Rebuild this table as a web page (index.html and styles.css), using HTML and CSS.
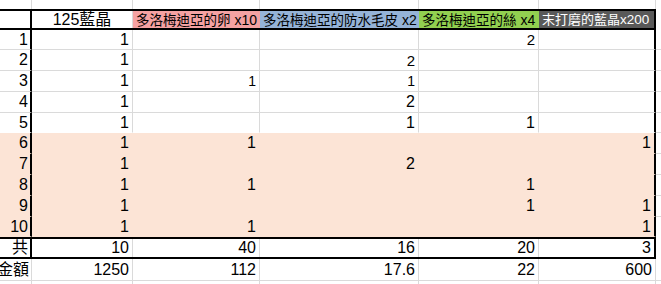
FILE: index.html
```html
<!DOCTYPE html>
<html lang="zh-Hant">
<head>
<meta charset="utf-8">
<title>藍晶</title>
<link rel="stylesheet" href="styles.css">
</head>
<body>
<div class="sheet">
  <div class="row strip">
    <div class="cell c0"></div><div class="cell c1"></div><div class="cell c2"></div><div class="cell c3"></div><div class="cell c4"></div><div class="cell c5"></div><div class="cell cx"></div>
  </div>
  <div class="rule"></div>
  <div class="row head boxed">
    <div class="cell c0"></div>
    <div class="cell c1 h-main">125藍晶</div>
    <div class="cell c2 h-col h-red">多洛梅迪亞的卵<span class="lat">&nbsp;x10</span></div>
    <div class="cell c3 h-col h-blue">多洛梅迪亞的防水毛皮<span class="lat">&nbsp;x2</span></div>
    <div class="cell c4 h-col h-green">多洛梅迪亞的絲<span class="lat">&nbsp;x4</span></div>
    <div class="cell c5 h-col h-gray">末打磨的藍晶<span class="lat">x200</span></div>
    <div class="cell cx"></div>
  </div>
  <div class="rule"></div>

  <div class="row r boxed first">
    <div class="cell c0">1</div><div class="cell c1">1</div><div class="cell c2"></div><div class="cell c3"></div><div class="cell c4 sm2">2</div><div class="cell c5"></div><div class="cell cx"></div>
  </div>
  <div class="row r boxed">
    <div class="cell c0">2</div><div class="cell c1">1</div><div class="cell c2"></div><div class="cell c3 sm2">2</div><div class="cell c4"></div><div class="cell c5"></div><div class="cell cx"></div>
  </div>
  <div class="row r boxed">
    <div class="cell c0">3</div><div class="cell c1">1</div><div class="cell c2 sm">1</div><div class="cell c3 sm">1</div><div class="cell c4"></div><div class="cell c5"></div><div class="cell cx"></div>
  </div>
  <div class="row r boxed">
    <div class="cell c0">4</div><div class="cell c1">1</div><div class="cell c2"></div><div class="cell c3">2</div><div class="cell c4"></div><div class="cell c5"></div><div class="cell cx"></div>
  </div>
  <div class="row r boxed last-white">
    <div class="cell c0">5</div><div class="cell c1">1</div><div class="cell c2"></div><div class="cell c3">1</div><div class="cell c4">1</div><div class="cell c5"></div><div class="cell cx"></div>
  </div>

  <div class="row r boxed peach">
    <div class="cell c0">6</div><div class="cell c1">1</div><div class="cell c2">1</div><div class="cell c3"></div><div class="cell c4"></div><div class="cell c5">1</div><div class="cell cx"></div>
  </div>
  <div class="row r boxed peach">
    <div class="cell c0">7</div><div class="cell c1">1</div><div class="cell c2"></div><div class="cell c3">2</div><div class="cell c4"></div><div class="cell c5"></div><div class="cell cx"></div>
  </div>
  <div class="row r boxed peach">
    <div class="cell c0">8</div><div class="cell c1">1</div><div class="cell c2">1</div><div class="cell c3"></div><div class="cell c4">1</div><div class="cell c5"></div><div class="cell cx"></div>
  </div>
  <div class="row r boxed peach">
    <div class="cell c0">9</div><div class="cell c1">1</div><div class="cell c2"></div><div class="cell c3"></div><div class="cell c4">1</div><div class="cell c5">1</div><div class="cell cx"></div>
  </div>
  <div class="row r boxed peach last-peach">
    <div class="cell c0">10</div><div class="cell c1">1</div><div class="cell c2">1</div><div class="cell c3"></div><div class="cell c4"></div><div class="cell c5">1</div><div class="cell cx"></div>
  </div>

  <div class="rule"></div>
  <div class="row total boxed">
    <div class="cell c0">共</div><div class="cell c1">10</div><div class="cell c2">40</div><div class="cell c3">16</div><div class="cell c4">20</div><div class="cell c5">3</div><div class="cell cx"></div>
  </div>
  <div class="rule"></div>
  <div class="row price">
    <div class="cell c0">金額</div><div class="cell c1">1250</div><div class="cell c2">112</div><div class="cell c3">17.6</div><div class="cell c4">22</div><div class="cell c5">600</div><div class="cell cx"></div>
  </div>
  <div class="row strip bottom">
    <div class="cell c0"></div><div class="cell c1"></div><div class="cell c2"></div><div class="cell c3"></div><div class="cell c4"></div><div class="cell c5"></div><div class="cell cx"></div>
  </div>
</div>
</body>
</html>
```

FILE: styles.css
```css
* { box-sizing: border-box; }

html, body {
  margin: 0;
  background: #fff;
  overflow: hidden;
}

body {
  font-family: "Liberation Sans", "Noto Sans CJK TC", sans-serif;
  color: #000;
}

.sheet {
  width: 700px;
}

.row {
  display: flex;
}

.cell {
  flex: none;
  display: flex;
  align-items: center;
  justify-content: flex-end;
  white-space: nowrap;
  font-size: 16px;
  line-height: 1;
  padding-right: 3px;
  border-right: 1px solid #dadada;
  border-bottom: 1px solid #dadada;
}

.c0 { width: 32px; padding-right: 2px; }
.c1 { width: 101px; }
.c2 { width: 127px; }
.c3 { width: 159px; }
.c4 { width: 120px; }
.c5 { width: 117px; }
.cx { width: 60px; }

.rule {
  width: 656px;
  height: 2px;
  background: #000;
}

/* top & bottom strips */
.strip .cell {
  height: 9px;
  border-bottom: none;
}
.strip.bottom .cell {
  height: 10px;
}

/* header */
.head .cell {
  height: 17px;
  border-bottom: none;
}
.head .cx { border-right: none; }
.h-main {
  justify-content: center;
  padding-right: 0;
}
.h-col {
  justify-content: flex-start;
  align-items: baseline;
  padding-top: 2px;
  padding-left: 3px;
  padding-right: 0;
  font-size: 13.5px;
  border-right-color: transparent;
}
.h-col .lat { font-size: 14px; }
.h-red { background: #f5a2a2; }
.h-blue { background: #95b3d7; }
.h-green { background: #92d050; }
.h-gray {
  background: #595959;
  color: #fff;
  padding-left: 3px;
  font-size: 13px;
}
.h-gray .lat { font-size: 13.5px; }

/* data rows */
.r .cell { height: 21px; }
.r.first .cell { height: 20px; }
.r.last-white .cell { height: 20px; }
.r.last-white .c0,
.r.last-white .c1,
.r.last-white .c2,
.r.last-white .c3,
.r.last-white .c4,
.r.last-white .c5 { border-bottom-color: transparent; }

.peach .c0,
.peach .c1,
.peach .c2,
.peach .c3,
.peach .c4,
.peach .c5 {
  background: #fce4d6;
  border-bottom-color: transparent;
}
.peach .c1,
.peach .c2,
.peach .c3,
.peach .c4 { border-right-color: transparent; }
.r.last-peach .cell { height: 20px; }
.r.last-peach .cx { border-bottom-color: transparent; }

/* box borders */
.boxed .c0 { border-right: 2px solid #000; }
.boxed .c5 { border-right: 2px solid #000; }

.sm { font-size: 14px; }
.sm2 { font-size: 15px; }

/* totals */
.total .cell {
  height: 18px;
  border-bottom: none;
}
.price .cell {
  height: 22px;
}
.price .c0 { border-right-width: 1px; }
```
